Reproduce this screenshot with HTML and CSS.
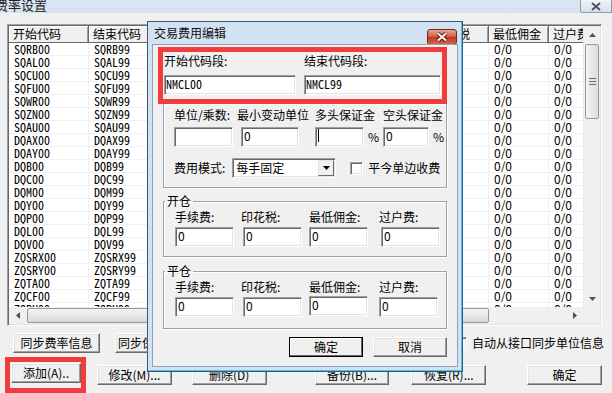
FILE: index.html
```html
<!DOCTYPE html>
<html lang="zh-CN">
  <head>
    <meta charset="UTF-8" />
    <title>费率设置</title>
    <link rel="stylesheet" href="styles.css">
  </head>
  <body>
    <div class="window">
      <div class="titlebar">
        <span class="title">费率设置</span>
        <button class="close">
          <svg width="12" height="9" viewBox="0 0 12 9">
            <path d="M2 1l8 7M10 1l-8 7" stroke="#4a5866" stroke-width="2" fill="none" />
          </svg>
        </button>
      </div>

      <div class="content">
        <div class="list">
          <div class="table">
            <div class="row head">
              <span>开始代码</span><span>结束代码</span><span>单位/乘数</span><span>印花税</span><span>最低佣金</span><span>过户费</span>
            </div>
            <div class="row"><span class="code">SQRB00</span><span class="code">SQRB99</span><span></span><span></span><span>0/0</span><span>0/0</span></div>
            <div class="row"><span class="code">SQAL00</span><span class="code">SQAL99</span><span></span><span></span><span>0/0</span><span>0/0</span></div>
            <div class="row"><span class="code">SQCU00</span><span class="code">SQCU99</span><span></span><span></span><span>0/0</span><span>0/0</span></div>
            <div class="row"><span class="code">SQFU00</span><span class="code">SQFU99</span><span></span><span></span><span>0/0</span><span>0/0</span></div>
            <div class="row"><span class="code">SQWR00</span><span class="code">SQWR99</span><span></span><span></span><span>0/0</span><span>0/0</span></div>
            <div class="row"><span class="code">SQZN00</span><span class="code">SQZN99</span><span></span><span></span><span>0/0</span><span>0/0</span></div>
            <div class="row"><span class="code">SQAU00</span><span class="code">SQAU99</span><span></span><span></span><span>0/0</span><span>0/0</span></div>
            <div class="row"><span class="code">DQAX00</span><span class="code">DQAX99</span><span></span><span></span><span>0/0</span><span>0/0</span></div>
            <div class="row"><span class="code">DQAY00</span><span class="code">DQAY99</span><span></span><span></span><span>0/0</span><span>0/0</span></div>
            <div class="row"><span class="code">DQB00</span><span class="code">DQB99</span><span></span><span></span><span>0/0</span><span>0/0</span></div>
            <div class="row"><span class="code">DQC00</span><span class="code">DQC99</span><span></span><span></span><span>0/0</span><span>0/0</span></div>
            <div class="row"><span class="code">DQM00</span><span class="code">DQM99</span><span></span><span></span><span>0/0</span><span>0/0</span></div>
            <div class="row"><span class="code">DQY00</span><span class="code">DQY99</span><span></span><span></span><span>0/0</span><span>0/0</span></div>
            <div class="row"><span class="code">DQP00</span><span class="code">DQP99</span><span></span><span></span><span>0/0</span><span>0/0</span></div>
            <div class="row"><span class="code">DQL00</span><span class="code">DQL99</span><span></span><span></span><span>0/0</span><span>0/0</span></div>
            <div class="row"><span class="code">DQV00</span><span class="code">DQV99</span><span></span><span></span><span>0/0</span><span>0/0</span></div>
            <div class="row"><span class="code">ZQSRX00</span><span class="code">ZQSRX99</span><span></span><span></span><span>0/0</span><span>0/0</span></div>
            <div class="row"><span class="code">ZQSRY00</span><span class="code">ZQSRY99</span><span></span><span></span><span>0/0</span><span>0/0</span></div>
            <div class="row"><span class="code">ZQTA00</span><span class="code">ZQTA99</span><span></span><span></span><span>0/0</span><span>0/0</span></div>
            <div class="row"><span class="code">ZQCF00</span><span class="code">ZQCF99</span><span></span><span></span><span>0/0</span><span>0/0</span></div>
            <div class="row"><span class="code">ZQRU00</span><span class="code">ZQRU99</span><span></span><span></span><span>0/0</span><span>0/0</span></div>
          </div>

          <div class="vscroll">
            <span class="arrow">
              <svg width="7" height="4" viewBox="0 0 7 4"><path d="M0 4L3.5 0L7 4z" fill="#505050" /></svg>
            </span>
            <span class="track"><span class="thumb v"><i></i><i></i><i></i></span></span>
            <span class="arrow">
              <svg width="7" height="4" viewBox="0 0 7 4"><path d="M0 0L3.5 4L7 0z" fill="#505050" /></svg>
            </span>
          </div>
          <div class="hscroll">
            <span class="arrow">
              <svg width="4" height="7" viewBox="0 0 4 7"><path d="M4 0L0 3.5L4 7z" fill="#505050" /></svg>
            </span>
            <span class="track"><span class="thumb h"></span></span>
            <span class="arrow">
              <svg width="4" height="7" viewBox="0 0 4 7"><path d="M0 0L4 3.5L0 7z" fill="#505050" /></svg>
            </span>
          </div>
          <div class="corner"></div>
        </div>

        <div class="actions first">
          <button class="btn sync">同步费率信息</button>
          <button class="btn sync2">同步保证金信息</button>
          <label class="check main-check"><span class="box"></span>自动从接口同步单位信息</label>
        </div>
        <div class="actions second">
          <div class="mark"><button class="btn add">添加(A)..</button></div>
          <button class="btn edit-btn">修改(M)...</button>
          <button class="btn del">删除(D)</button>
          <button class="btn backup">备份(B)...</button>
          <button class="btn restore">恢复(R)...</button>
          <button class="btn ok">确定</button>
        </div>
      </div>
    </div>

    <div class="dialog">
      <div class="dlg-title">
        <span>交易费用编辑</span>
        <button class="dlg-close">
          <svg width="14" height="10" viewBox="0 0 14 10">
            <path d="M3 1.5l8 7M11 1.5l-8 7" stroke="#5a1a10" stroke-width="4" fill="none" />
            <path d="M3 1.5l8 7M11 1.5l-8 7" stroke="#fff" stroke-width="2" fill="none" />
          </svg>
        </button>
      </div>

      <div class="dlg-body">
        <div class="range">
          <div class="field">
            <span>开始代码段:</span>
            <span class="edit code">NMCL00</span>
          </div>
          <div class="field">
            <span>结束代码段:</span>
            <span class="edit code">NMCL99</span>
          </div>
        </div>

        <div class="group units">
          <span>单位/乘数:</span>
          <span>最小变动单位</span>
          <span>多头保证金</span>
          <span>空头保证金</span>
          <span class="edit w59"></span>
          <span class="edit w58 shift">0</span>
          <span class="pct"><span class="edit w49"><i class="caret"></i></span>%</span>
          <span class="pct"><span class="edit w46">0</span>%</span>
          <div class="mode">
            <span>费用模式:</span>
            <span class="select">
              <span class="value">每手固定</span>
              <span class="drop">
                <svg width="7" height="4" viewBox="0 0 7 4"><path d="M0 0h7L3.5 4z" fill="#000" /></svg>
              </span>
            </span>
            <label class="check"><span class="box"></span>平今单边收费</label>
          </div>
        </div>

        <fieldset class="group fees">
          <legend>开仓</legend>
          <div class="fee-grid">
            <span>手续费:</span>
            <span>印花税:</span>
            <span>最低佣金:</span>
            <span>过户费:</span>
            <span class="edit">0</span>
            <span class="edit shift2">0</span>
            <span class="edit">0</span>
            <span class="edit shift2">0</span>
          </div>
        </fieldset>

        <fieldset class="group fees close-pos">
          <legend>平仓</legend>
          <div class="fee-grid">
            <span>手续费:</span>
            <span>印花税:</span>
            <span>最低佣金:</span>
            <span>过户费:</span>
            <span class="edit">0</span>
            <span class="edit shift2">0</span>
            <span class="edit up">0</span>
            <span class="edit">0</span>
          </div>
        </fieldset>

        <div class="dlg-actions">
          <button class="btn default">确定</button>
          <button class="btn">取消</button>
        </div>
      </div>
    </div>
  </body>
</html>
```

FILE: styles.css
```css
* {
  box-sizing: border-box;
}

body {
  margin: 0;
  width: 612px;
  height: 393px;
  overflow: hidden;
  position: relative;
  background: #f0f0f0;
  font: 12px/16px "Noto Sans CJK SC", sans-serif;
  color: #000;
}

button {
  font: inherit;
  color: inherit;
  margin: 0;
  padding: 0;
}

.code {
  font-family: "Noto Sans Mono CJK SC", "DejaVu Sans Mono", monospace;
}

/* main window */
.window {
  display: flex;
  flex-direction: column;
  height: 100%;
}

.titlebar {
  height: 17px;
  display: flex;
  justify-content: space-between;
  background: linear-gradient(#dbe6f3, #d5e1ef);

  .title {
    margin: -3px 0 0 -5px;
    font-size: 13px;
    color: #222;
  }
}

.close {
  width: 32px;
  height: 13px;
  border: 1px solid #8c9bad;
  border-top: 0;
  border-radius: 0 0 0 3px;
  background: linear-gradient(#f2f5f9, #d6dee9);
  display: grid;
  place-items: center;
}

.content {
  padding: 11px 10px 0 7px;
}

.list {
  height: 302px;
  display: grid;
  grid-template-columns: 1fr 17px;
  grid-template-rows: 1fr 17px;
  padding: 1px;
  background: #fff;
  border: 1px solid;
  border-color: #a0a0a0 #fff #fff #a0a0a0;
  box-shadow: inset 1px 1px 0 #696969, inset -1px -1px 0 #e3e3e3;
}

.table {
  overflow: hidden;
}

.row {
  display: grid;
  grid-template-columns: 80px 80px 261px 59px 60px 70px;
  height: 13px;
  line-height: 12px;
  border-bottom: 1px solid #f0f0f0;
  white-space: nowrap;

  span {
    padding-left: 5px;
    border-right: 1px solid #f0f0f0;
    overflow: hidden;
  }
}

.row.head {
  height: 17px;
  line-height: 15px;
  border-bottom: 1px solid #696969;

  span {
    padding-left: 4px;
    background: #f0f0f0;
    border-right: 1px solid #696969;
    box-shadow: inset 1px 1px 0 #fff, inset -1px 0 0 #a0a0a0;
  }
}

.vscroll,
.hscroll {
  display: flex;
  background: #f0f0f0;

  .arrow {
    flex: 0 0 17px;
    display: grid;
    place-items: center;
  }

  .track {
    flex: 1;
    display: flex;
  }
}

.vscroll {
  flex-direction: column;
  border-left: 1px solid #e8e8e8;

  .track {
    flex-direction: column;
    padding: 1px 1px 0 1px;
  }
}

.hscroll {
  .track {
    padding: 1px 0 1px 1px;
  }
}

.thumb {
  border: 1px solid #979797;
  border-radius: 2px;
  background: linear-gradient(to right, #f4f4f4, #dcdcdc);
}

.thumb.v {
  height: 75px;
  display: flex;
  flex-direction: column;
  justify-content: center;
  align-items: center;
  gap: 2px;

  i {
    width: 7px;
    height: 1px;
    background: #6b6b6b;
  }
}

.thumb.h {
  width: 462px;
  background: linear-gradient(#f4f4f4, #d8d8d8);
}

.corner {
  background: #f0f0f0;
}

.actions {
  display: flex;
  align-items: center;
}

.actions.first {
  margin-top: 7px;
  padding-left: 6px;

  .sync {
    width: 87px;
  }

  .sync2 {
    width: 90px;
    margin-left: 15px;
  }

  .main-check {
    margin-left: auto;
    margin-right: -2px;
  }
}

.actions.second {
  margin-top: 4px;
  margin-left: -2px;

  .edit-btn {
    margin-left: 11px;
    width: 75px;
  }

  .del {
    margin-left: 20px;
    width: 75px;
  }

  .backup {
    margin-left: 48px;
    width: 75px;
  }

  .restore {
    margin-left: 22px;
    width: 75px;
  }

  .ok {
    margin-left: 41px;
    width: 75px;
  }
}

.mark {
  border: 5px solid #f03c3c;
  padding: 1px 0 3px 1px;
  height: 36px;

  .add {
    width: 70px;
  }
}

.btn {
  height: 20px;
  line-height: 16px;
  text-align: center;
  background: #f0f0f0;
  border: 1px solid;
  border-color: #fff #696969 #696969 #fff;
  box-shadow: inset -1px -1px 0 #a0a0a0, inset 1px 1px 0 #e3e3e3;
}

.check {
  display: flex;
  align-items: center;
  gap: 5px;

  .box {
    width: 13px;
    height: 13px;
    background: #fff;
    border: 1px solid;
    border-color: #a0a0a0 #fff #fff #a0a0a0;
    box-shadow: inset 1px 1px 0 #696969, inset -1px -1px 0 #e3e3e3;
  }
}

/* fee editing dialog */
.dialog {
  position: absolute;
  left: 147px;
  top: 21px;
  width: 316px;
  height: 351px;
  display: flex;
  flex-direction: column;
  padding: 0 4px 4px 4px;
  background: #d3e2f3;
  border: 1px solid #37597a;
  box-shadow: inset -1px -1px 0 #3fc6f2;
}

.dlg-title {
  height: 22px;
  display: flex;
  align-items: center;
  justify-content: space-between;
  padding-left: 2px;
  font-size: 12px;
  color: #111;
}

.dlg-close {
  width: 30px;
  height: 16px;
  margin: 8px 1px 0 0;
  display: grid;
  place-items: center;
  border: 1px solid #6e2a1e;
  border-radius: 3px;
  background: linear-gradient(#e9a493, #cc5b44 50%, #b8371f 51%, #d2654a);
}

.dlg-body {
  flex: 1;
  background: #f0f0f0;
  border: 1px solid #8ea2b9;
  padding: 2px 10px 0 5px;
}

.edit {
  height: 20px;
  padding-left: 2px;
  line-height: 16px;
  background: #fff;
  border: 1px solid;
  border-color: #a0a0a0 #fff #fff #a0a0a0;
  box-shadow: inset 1px 1px 0 #696969, inset -1px -1px 0 #e3e3e3;
  overflow: hidden;
  white-space: nowrap;
}

.range {
  display: grid;
  grid-template-columns: 132px 137px;
  column-gap: 8px;
  padding: 1px 0 4px 1px;
  border: 5px solid #f03c3c;

  .field {
    display: flex;
    flex-direction: column;
    gap: 6px;
  }

  .edit {
    padding-left: 1px;
  }
}

.group {
  margin: 0 0 0 5px;
  border: 1px solid #a0a0a0;
  box-shadow: inset 1px 1px 0 #fff, 1px 1px 0 #fff;
  white-space: nowrap;
}

.units {
  display: grid;
  border-top: 0;
  grid-template-columns: 63px 78px 68px 1fr;
  padding: 3px 0 9px 10px;
  row-gap: 4px;

  .w59 { width: 59px; }
  .w58 { width: 58px; }
  .w49 { width: 49px; }
  .w46 { width: 46px; }
  .shift { margin-left: 4px; }

  .pct {
    display: flex;
    align-items: center;
    gap: 4px;
  }

  .caret {
    display: block;
    width: 1px;
    height: 13px;
    margin-top: 1px;
    background: #000;
  }
}

.mode {
  grid-column: 1 / -1;
  margin-top: 7px;
  display: flex;
  align-items: center;

  .select {
    margin-left: 7px;
    width: 104px;
    height: 20px;
    display: flex;
    background: #fff;
    border: 1px solid;
    border-color: #a0a0a0 #fff #fff #a0a0a0;
    box-shadow: inset 1px 1px 0 #696969, inset -1px -1px 0 #e3e3e3;
    padding: 1px;
  }

  .value {
    flex: 1;
    padding-left: 2px;
  }

  .drop {
    width: 16px;
    display: grid;
    place-items: center;
    background: #f0f0f0;
    border: 1px solid;
    border-color: #e3e3e3 #696969 #696969 #e3e3e3;
  }

  .check {
    margin-left: 14px;
  }
}

fieldset.group {
  margin-top: 5px;
  min-width: 0;
  padding: 0 0 9px 0;

  legend {
    padding: 0 2px;
    margin-left: 1px;
  }
}

.fee-grid {
  display: grid;
  grid-template-columns: 66px 68px 70px 1fr;
  row-gap: 2px;
  padding-left: 11px;

  .edit {
    width: 59px;
  }

  .shift2 {
    margin-left: 2px;
  }
}

fieldset.close-pos {
  margin-top: 6px;
  padding-bottom: 11px;

  .up {
    margin-top: -1px;
  }
}

.dlg-actions {
  display: flex;
  justify-content: flex-end;
  gap: 10px;
  margin-top: 8px;

  .btn {
    width: 74px;
  }

  .default {
    border-color: #000;
    box-shadow: inset -1px -1px 0 #696969, inset 1px 1px 0 #fff;
  }
}
```
